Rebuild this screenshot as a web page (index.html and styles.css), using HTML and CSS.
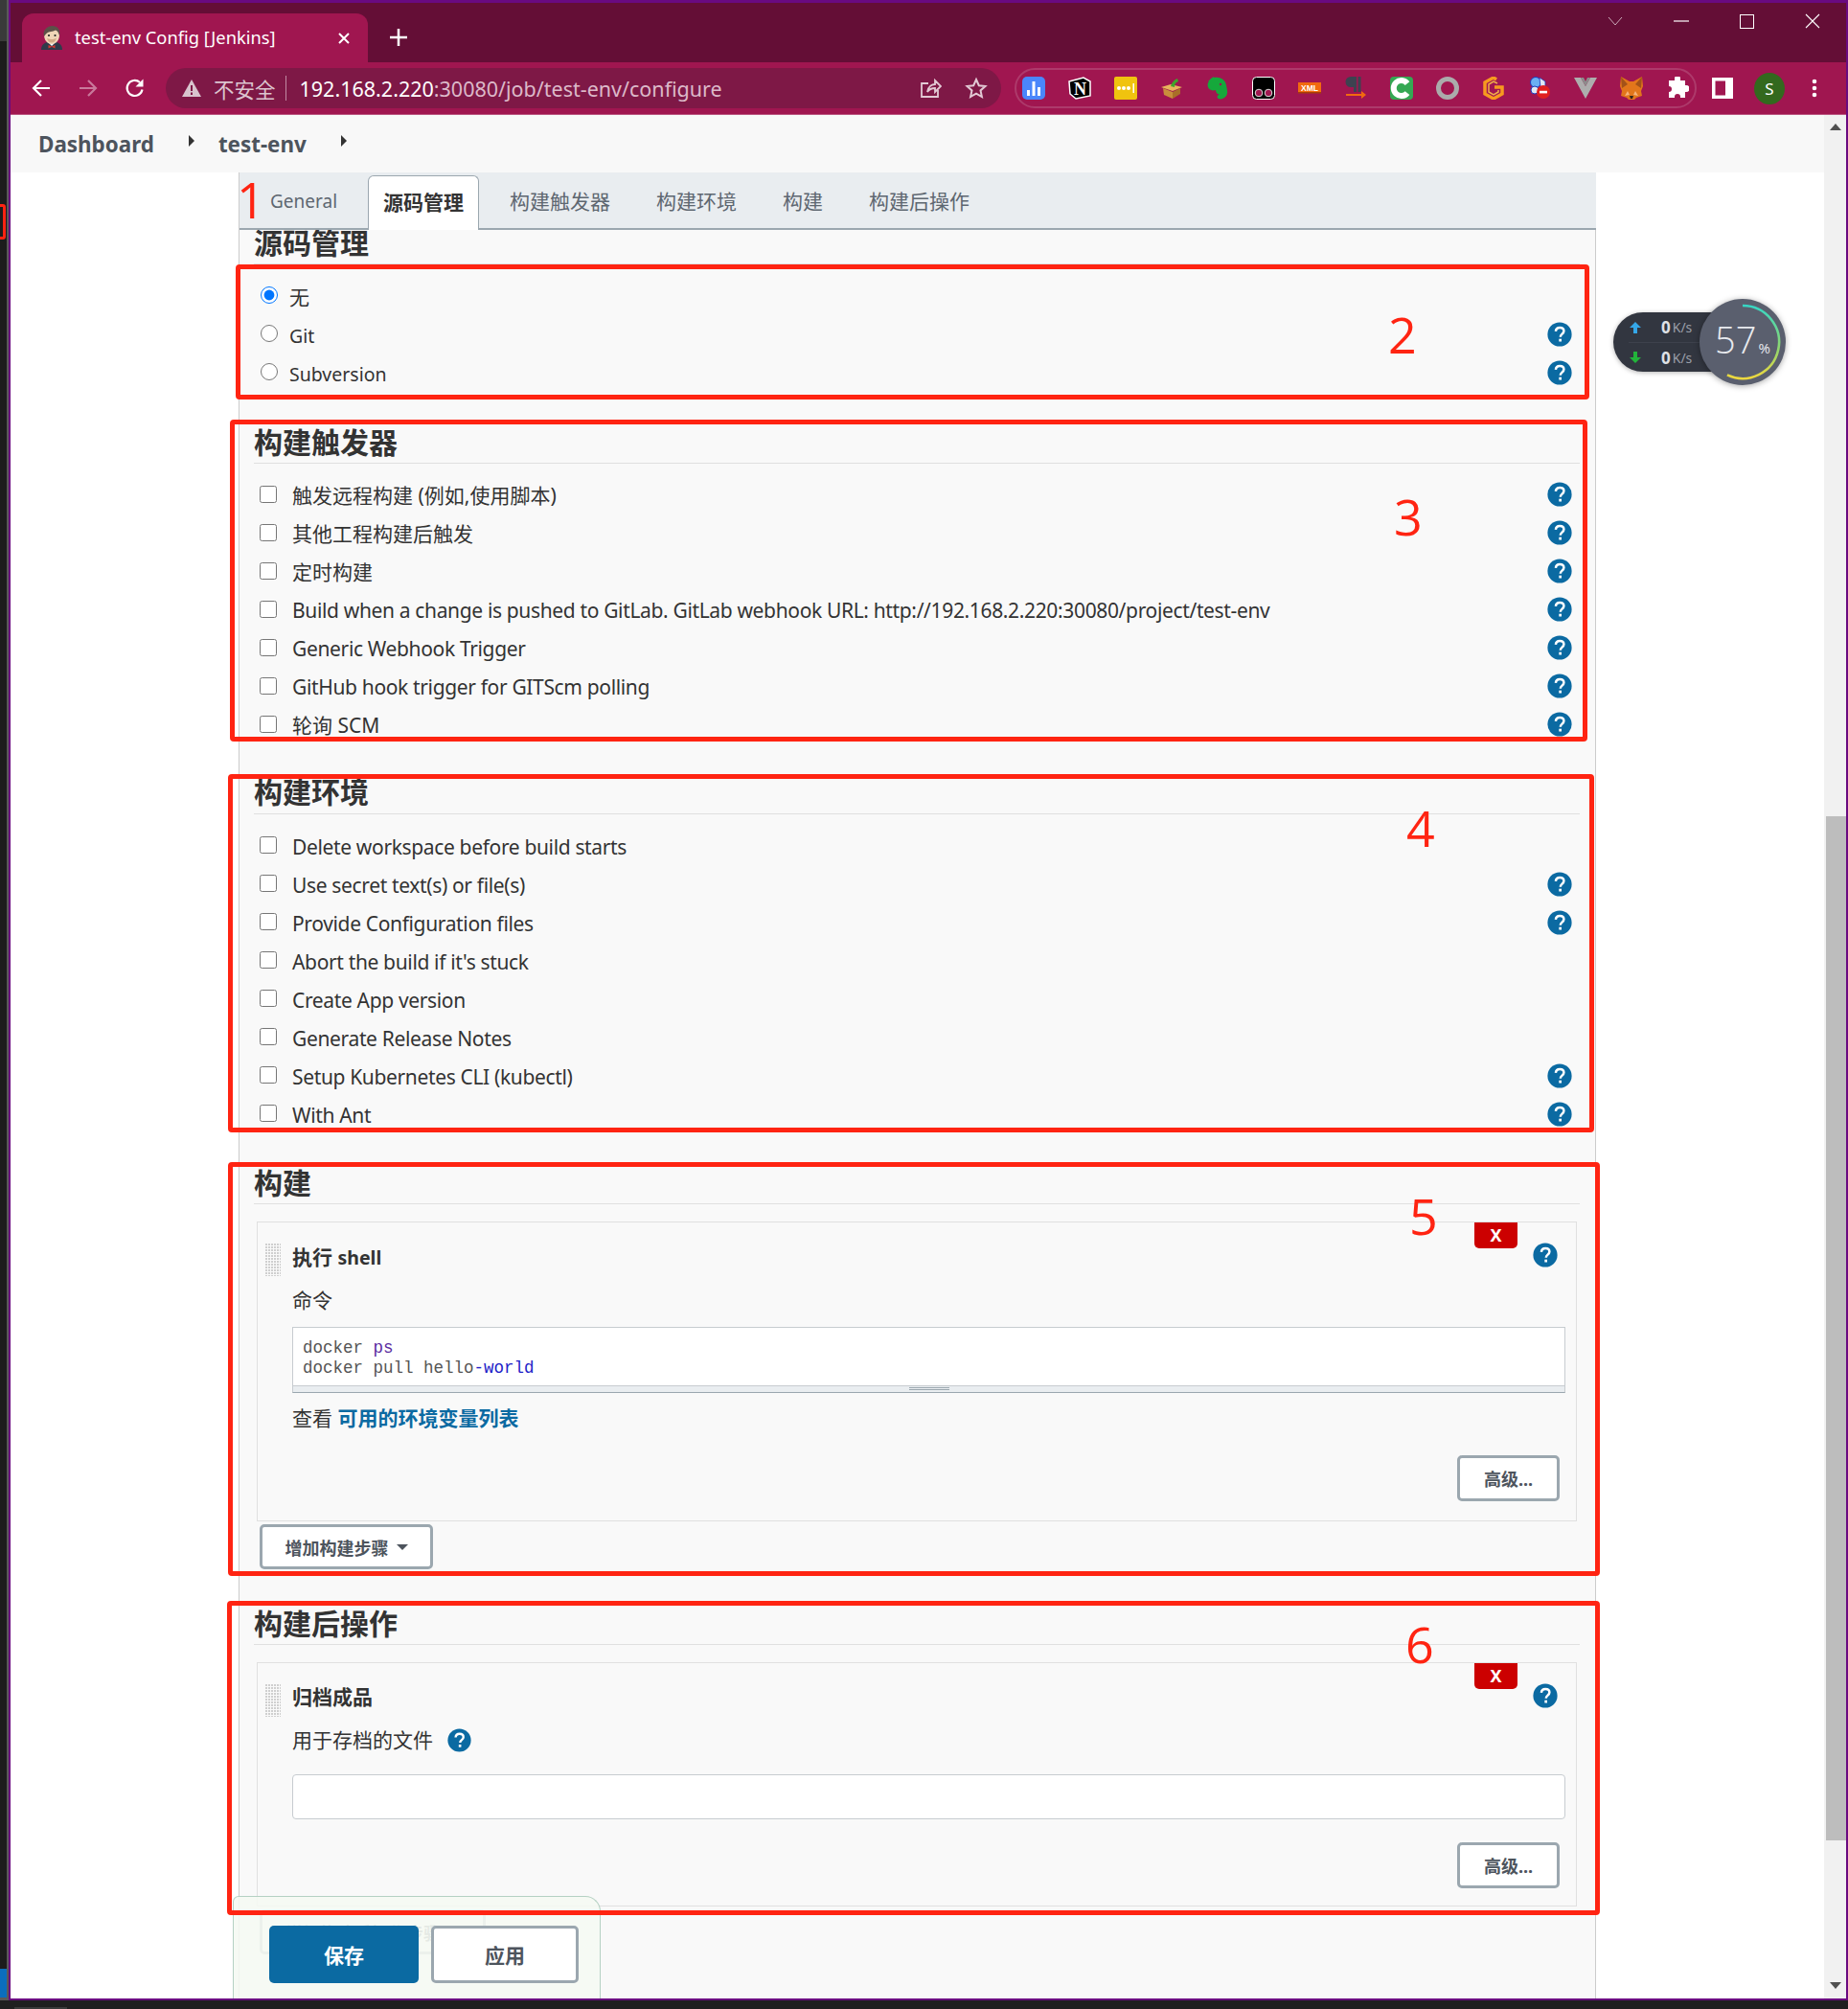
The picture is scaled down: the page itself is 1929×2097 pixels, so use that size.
FILE: index.html
```html
<!DOCTYPE html>
<html lang="zh-CN">
<head>
  <meta charset="UTF-8">
  <meta name="viewport" content="width=device-width, initial-scale=1.0">
  <link rel="stylesheet" href="styles.css">
  <title>test-env Config [Jenkins]</title>
</head>
<body>
  <svg class="defs" width="0" height="0">
    <symbol id="help" viewBox="0 0 26 26">
      <circle cx="13" cy="13" r="12.6" fill="#0b6aa2"/>
      <path d="M8.9 9.9c.2-2.5 2-3.9 4.3-3.9 2.4 0 4.2 1.4 4.2 3.5 0 3.2-3.6 3.1-3.6 6.2" fill="none" stroke="#fff" stroke-width="2.5"/>
      <rect x="12.3" y="17.7" width="2.7" height="2.8" fill="#fff"/>
    </symbol>
  </svg>

  <div class="rail">
    <div class="rail-top"></div>
    <i class="desk-mark"></i>
    <div class="rail-blue"></div>
  </div>

  <div class="window">
    <div class="tabstrip">
      <div class="tab">
        <svg class="favicon" width="24" height="25" viewBox="0 0 24 25">
          <path d="M1 25c0-5 3-7 6-8h10c3 1 6 3 6 8z" fill="#2f3a4a"/>
          <path d="M8 17h8l-4 4z" fill="#fff"/>
          <path d="M8.5 20l3.500 1.500 3.500-1.500v3.500L12 22l-3.500 1.500z" fill="#d33833"/>
          <path d="M4 9.500C4 4 7.500 1 12.500 1S20 4 20 9.500C20 15 16.500 19 12 19s-8-4-8-9.500z" fill="#f0d6b7"/>
          <path d="M4 11C2 4 8 0 12.500 0 18 0 21.500 4 20 10c-1-3-2-5-4-5.500-3 1.500-7 1.500-9 3-1 1-2 2-3 3.500z" fill="#5b5048"/>
          <path d="M7 13c3 1.500 7 1.500 10-.5-1 3.500-2.500 5-5 5s-4-1.500-5-4.500z" fill="#d2ab87"/>
          <circle cx="9" cy="10" r="1.100" fill="#222"/><circle cx="15.500" cy="10" r="1.100" fill="#222"/>
        </svg>
        <span class="tab-title">test-env Config [Jenkins]</span>
        <svg class="tab-close" width="14" height="14" viewBox="0 0 14 14"><path d="M2 2l10 10M12 2L2 12" stroke="#fff" stroke-width="2"/></svg>
      </div>
      <svg class="new-tab" width="20" height="20" viewBox="0 0 20 20"><path d="M10 1v18M1 10h18" stroke="#fff" stroke-width="2.5"/></svg>
      <div class="window-controls">
        <svg width="16" height="10" viewBox="0 0 16 10"><path d="M1 1l7 8 7-8" fill="none" stroke="#c9a9b8" stroke-width="1"/></svg>
        <svg width="16" height="2" viewBox="0 0 16 2"><path d="M0 1h16" stroke="#fff" stroke-width="1.2"/></svg>
        <svg width="15" height="15" viewBox="0 0 15 15"><rect x=".5" y=".5" width="14" height="14" fill="none" stroke="#fff"/></svg>
        <svg width="16" height="16" viewBox="0 0 16 16"><path d="M1 1l14 14M15 1L1 15" stroke="#fff" stroke-width="1.1"/></svg>
      </div>
    </div>

    <div class="toolbar">
      <div class="nav-buttons">
        <svg width="22" height="22" viewBox="0 0 22 22"><path d="M20 11H3M11 3l-8 8 8 8" fill="none" stroke="#fff" stroke-width="2.2"/></svg>
        <svg width="22" height="22" viewBox="0 0 22 22"><path d="M2 11h17M11 3l8 8-8 8" fill="none" stroke="#c9799b" stroke-width="2.2"/></svg>
        <svg width="22" height="22" viewBox="0 0 22 22"><path d="M18.5 12.5A8 8 0 1 1 16 5" fill="none" stroke="#fff" stroke-width="2.2"/><path d="M19.5 1.500v8h-8z" fill="#fff"/></svg>
      </div>
      <div class="address">
        <svg class="warn" width="20" height="18" viewBox="0 0 20 18"><path d="M10 0l10 18H0z" fill="#d8c3cd"/><path d="M9 6h2v6H9zM9 13.5h2V16H9z" fill="#7e1846"/></svg>
        <span class="not-secure">不安全</span>
        <span class="address-sep"></span>
        <span class="url"><b>192.168.2.220</b>:30080/job/test-env/configure</span>
        <svg class="share" width="24" height="24" viewBox="0 0 24 24"><path d="M20 14v7H3V7h7M9 16c1-6 5-8 8-8V4l6 6-6 6v-4c-3 0-6 1-8 4z" fill="none" stroke="#e2c9d4" stroke-width="1.8"/></svg>
        <svg class="star" width="24" height="24" viewBox="0 0 24 24"><path d="M12 3l2.8 6.2 6.700.7-5 4.500 1.400 6.600L12 17.600 6.100 21l1.400-6.600-5-4.500 6.700-.7z" fill="none" stroke="#e2c9d4" stroke-width="2"/></svg>
      </div>
      <div class="extensions">
        <svg width="24" height="24" viewBox="0 0 24 24"><rect width="24" height="24" rx="5" fill="#4a86fb"/><path d="M5 14h3v6H5zM10.5 5h3v15h-3zM16 11h3v9h-3z" fill="#fff"/></svg>
        <svg width="24" height="24" viewBox="0 0 24 24"><path d="M1 5l15-4 7 4v15l-15 3-6-5z" fill="#000" stroke="#fff" stroke-width="1.5"/><text x="12.5" y="19" class="ext-n">N</text></svg>
        <svg width="24" height="24" viewBox="0 0 24 24"><rect width="24" height="24" rx="2" fill="#f0c30f"/><circle cx="5" cy="12" r="2" fill="#fff"/><circle cx="10" cy="12" r="2" fill="#fff"/><circle cx="15" cy="12" r="2" fill="#fff"/><rect x="19.5" y="7" width="1.500" height="10" fill="#fff"/></svg>
        <svg width="24" height="24" viewBox="0 0 24 24"><path d="M1 11l10-3 12 3-10 4z" fill="#e8b45c"/><path d="M3 12l10 4v7l-9-4z" fill="#c98e3c"/><path d="M13 16l8-4v6l-8 5z" fill="#a96f28"/><path d="M11 10c1-4 4-7 7-8l1 3c-3 1-4 3-4 6z" fill="#3fa52b"/></svg>
        <svg width="24" height="24" viewBox="0 0 24 24"><path d="M5 2l3-2v5H2zM8 1c5-1 12 1 13 8 1 5 2 8 0 11-2 3-6 4-8 3-2-1-2-4 1-4-3-1-4-3-4-5-3 1-7 0-8-3-1-3 0-5 1-6h5z" fill="#15a83b"/><circle cx="15" cy="8" r="1.2" fill="#a01650"/></svg>
        <svg width="24" height="24" viewBox="0 0 24 24"><rect x=".5" y=".5" width="23" height="23" rx="4" fill="#000" stroke="#fff"/><circle cx="7" cy="17" r="3.8" fill="#a01650" stroke="#ddd"/><circle cx="17" cy="17" r="3.8" fill="#a01650" stroke="#ddd"/></svg>
        <svg width="24" height="24" viewBox="0 0 24 24"><rect y="6" width="24" height="11" fill="#f26a0f"/><rect y="16" width="24" height="1.5" fill="#a63f06"/><text x="12" y="14.5" class="ext-xml">XML</text></svg>
        <svg width="24" height="24" viewBox="0 0 24 24"><path d="M10 0H7a5.500 5.500 0 0 0 0 11h3zM10 0h3v16h-3zM14.500 0h3v16h-3z" fill="#3d4250"/><path d="M2 19h17" stroke="#f26a0f" stroke-width="2"/><path d="M18 15l5 4-5 4z" fill="#f26a0f"/></svg>
        <svg width="24" height="24" viewBox="0 0 24 24"><rect width="24" height="24" rx="4" fill="#34a853"/><path d="M18 7a8 8 0 1 0 0 10" fill="none" stroke="#fff" stroke-width="6"/></svg>
        <svg width="24" height="24" viewBox="0 0 24 24"><circle cx="12" cy="12" r="9.5" fill="none" stroke="#ababab" stroke-width="5"/></svg>
        <svg width="24" height="24" viewBox="0 0 24 24"><path d="M15 3l-3-2-9 5v12l9 5 9-5v-7h-8" fill="none" stroke="#f79a1f" stroke-width="3.5"/><path d="M16 7l-4-2-5 3v8l5 3 5-3v-2" fill="none" stroke="#f0b04a" stroke-width="1.5"/></svg>
        <svg width="24" height="24" viewBox="0 0 24 24"><circle cx="8" cy="6" r="5.500" fill="#6ab0f3" stroke="#1c39bb"/><path d="M12 1l6 4v6l-5 1z" fill="#dfe8f5" stroke="#1c39bb" stroke-width=".8"/><circle cx="7" cy="14" r="4" fill="#dfe8f5" stroke="#1c39bb"/><circle cx="16" cy="16" r="7" fill="#e02020"/><rect x="12" y="14.8" width="8" height="2.600" fill="#fff"/></svg>
        <svg width="24" height="24" viewBox="0 0 24 24"><path d="M0 1h7l5 9 5-9h7L12 23z" fill="#adadad"/><path d="M7 1h3l2 4 2-4h3l-5 9z" fill="#8c8c8c"/></svg>
        <svg width="24" height="24" viewBox="0 0 24 24"><path d="M1 0l9 5h4l9-5 1 10-2 5 1 5-6 2-2 2h-6l-2-2-6-2 1-5-2-5z" fill="#e2761b"/><path d="M1 0l7 8-6 4zM23 0l-7 8 6 4z" fill="#a35218"/><path d="M8 15l-3 5 5-1zM16 15l3 5-5-1z" fill="#f6b27a"/><path d="M10 20h4l-1 3h-2z" fill="#33261d"/></svg>
        <svg width="24" height="24" viewBox="0 0 24 24"><path d="M9 2a3 3 0 0 1 6 0v2h5v5h1a3.500 3.500 0 0 1 0 7h-1v6h-5v-1a3 3 0 0 0-6 0v1H3v-6a3 3 0 0 0 0-6V4h6z" fill="#fff"/></svg>
      </div>
      <svg class="side-panel" width="22" height="22" viewBox="0 0 22 22"><path d="M0 0h22v22H0zM3.5 3.500v15H14v-15z" fill="#fff" fill-rule="evenodd"/></svg>
      <span class="avatar">S</span>
      <svg class="more" width="6" height="22" viewBox="0 0 6 22"><circle cx="3" cy="4" r="2.3" fill="#fff"/><circle cx="3" cy="11" r="2.3" fill="#fff"/><circle cx="3" cy="18" r="2.3" fill="#fff"/></svg>
    </div>

    <div class="viewport">
      <div class="page">
        <nav class="breadcrumb">
          <a>Dashboard</a><i class="crumb-arrow"></i><a>test-env</a><i class="crumb-arrow"></i>
        </nav>
        <div class="main">
          <div class="panel">
            <div class="tabbar">
              <span class="config-tab general">General</span>
              <span class="config-tab active">源码管理</span>
              <span class="config-tab">构建触发器</span>
              <span class="config-tab">构建环境</span>
              <span class="config-tab">构建</span>
              <span class="config-tab">构建后操作</span>
            </div>

            <section class="section section-scm">
              <h2>源码管理</h2>
              <div class="rows radios">
                <label class="row"><input type="radio" name="scm" checked><span>无</span></label>
                <label class="row"><input type="radio" name="scm"><span class="en">Git</span><svg class="help"><use href="#help"/></svg></label>
                <label class="row"><input type="radio" name="scm"><span class="en">Subversion</span><svg class="help"><use href="#help"/></svg></label>
              </div>
            </section>

            <section class="section section-triggers">
              <h2>构建触发器</h2>
              <div class="rows">
                <label class="row"><input type="checkbox"><span>触发远程构建 (例如,使用脚本)</span><svg class="help"><use href="#help"/></svg></label>
                <label class="row"><input type="checkbox"><span>其他工程构建后触发</span><svg class="help"><use href="#help"/></svg></label>
                <label class="row"><input type="checkbox"><span>定时构建</span><svg class="help"><use href="#help"/></svg></label>
                <label class="row"><input type="checkbox"><span class="en">Build when a change is pushed to GitLab. GitLab webhook URL: http://192.168.2.220:30080/project/test-env</span><svg class="help"><use href="#help"/></svg></label>
                <label class="row"><input type="checkbox"><span class="en">Generic Webhook Trigger</span><svg class="help"><use href="#help"/></svg></label>
                <label class="row"><input type="checkbox"><span class="en">GitHub hook trigger for GITScm polling</span><svg class="help"><use href="#help"/></svg></label>
                <label class="row"><input type="checkbox"><span>轮询 SCM</span><svg class="help"><use href="#help"/></svg></label>
              </div>
            </section>

            <section class="section section-env">
              <h2>构建环境</h2>
              <div class="rows">
                <label class="row"><input type="checkbox"><span class="en">Delete workspace before build starts</span></label>
                <label class="row"><input type="checkbox"><span class="en">Use secret text(s) or file(s)</span><svg class="help"><use href="#help"/></svg></label>
                <label class="row"><input type="checkbox"><span class="en">Provide Configuration files</span><svg class="help"><use href="#help"/></svg></label>
                <label class="row"><input type="checkbox"><span class="en">Abort the build if it's stuck</span></label>
                <label class="row"><input type="checkbox"><span class="en">Create App version</span></label>
                <label class="row"><input type="checkbox"><span class="en">Generate Release Notes</span></label>
                <label class="row"><input type="checkbox"><span class="en">Setup Kubernetes CLI (kubectl)</span><svg class="help"><use href="#help"/></svg></label>
                <label class="row"><input type="checkbox"><span class="en">With Ant</span><svg class="help"><use href="#help"/></svg></label>
              </div>
            </section>

            <section class="section">
              <h2>构建</h2>
              <div class="card">
                <div class="card-head">
                  <span class="handle"></span>
                  <b class="card-title">执行 <span class="title-en">shell</span></b>
                  <span class="remove">X</span>
                  <svg class="help"><use href="#help"/></svg>
                </div>
                <div class="card-body">
                  <div class="field-label">命令</div>
                  <div class="code-box">
                    <pre class="code">docker <span class="kw">ps</span>
docker pull hello<span class="op">-world</span></pre>
                    <div class="grip"><i></i></div>
                  </div>
                  <div class="hint">查看 <a>可用的环境变量列表</a></div>
                  <div class="card-actions"><button class="btn">高级...</button></div>
                </div>
              </div>
              <button class="btn btn-add">增加构建步骤<i class="caret"></i></button>
            </section>

            <section class="section section-post">
              <h2>构建后操作</h2>
              <div class="card card-post">
                <div class="card-head">
                  <span class="handle"></span>
                  <b class="card-title">归档成品</b>
                  <span class="remove">X</span>
                  <svg class="help"><use href="#help"/></svg>
                </div>
                <div class="card-body">
                  <div class="field-label">用于存档的文件 <svg class="help help-inline"><use href="#help"/></svg></div>
                  <input class="text-input" type="text">
                  <div class="card-actions"><button class="btn">高级...</button></div>
                </div>
              </div>
              <button class="btn btn-add btn-add-post">增加构建后操作步骤<i class="caret"></i></button>
            </section>

            <div class="bottom-bar">
              <button class="btn-save">保存</button>
              <button class="btn btn-apply">应用</button>
            </div>
          </div>
        </div>
      </div>
      <div class="scrollbar">
        <i class="scroll-up"></i>
        <div class="scroll-track"><div class="scroll-thumb"></div></div>
        <i class="scroll-down"></i>
      </div>
    </div>
  </div>

  <!-- hand drawn notes on top of the screenshot -->
  <div class="note-box note-box-2"></div>
  <div class="note-box note-box-3"></div>
  <div class="note-box note-box-4"></div>
  <div class="note-box note-box-5"></div>
  <div class="note-box note-box-6"></div>
  <span class="note-num note-num-1">1</span>
  <span class="note-num note-num-2">2</span>
  <span class="note-num note-num-3">3</span>
  <span class="note-num note-num-4">4</span>
  <span class="note-num note-num-5">5</span>
  <span class="note-num note-num-6">6</span>
  <i class="desk-pill"></i>

  <div class="speed">
    <div class="speed-pill">
      <div class="speed-line"><svg width="14" height="14" viewBox="0 0 14 14"><path d="M7 1l6 6H9v6H5V7H1z" fill="#35a7e8"/></svg><b>0</b><small>K/s</small></div>
      <div class="speed-line"><svg width="14" height="14" viewBox="0 0 14 14"><path d="M7 13l6-6H9V1H5v6H1z" fill="#22b33a"/></svg><b>0</b><small>K/s</small></div>
    </div>
    <div class="speed-dial">
      <svg width="90" height="90" viewBox="0 0 90 90">
        <defs><linearGradient id="ring" gradientUnits="userSpaceOnUse" x1="0" y1="6" x2="0" y2="82"><stop offset="0" stop-color="#35d6c6"/><stop offset=".6" stop-color="#8fd66f"/><stop offset="1" stop-color="#ecd83f"/></linearGradient></defs>
        <path d="M45 7A38 38 0 1 1 28.9 79.4" fill="none" stroke="url(#ring)" stroke-width="2.6"/>
      </svg>
      <span class="dial-value">57<small>%</small></span>
    </div>
  </div>
</body>
</html>
```

FILE: styles.css
```css
* {
  box-sizing: border-box;
}
html, body {
  margin: 0;
  height: 2097px;
  overflow: hidden;
}
body {
  background: #1f1f1f;
  font-family: "Noto Sans", "Noto Sans CJK SC", sans-serif;
  font-size: 21px;
  color: #333;
  display: flex;
  align-items: flex-start;
  position: relative;
}
.defs {
  position: absolute;
}

/* what shows of the desktop behind the browser */
.rail {
  width: 9px;
  height: 2088px;
  flex: none;
  background: #1c1c1c;
  border-right: 2px solid #5a5a5a;
  border-bottom: 3px solid #5a5a5a;
  display: flex;
  flex-direction: column;
  justify-content: space-between;
  position: relative;
}
.rail-top {
  height: 43px;
  background: #3a3a3a;
}
.rail-blue {
  height: 30px;
  background: #0a6ebd;
}
.desk-mark {
  position: absolute;
  left: -4px;
  top: 213px;
  width: 10px;
  height: 37px;
  border: 3px solid #ff2412;
  border-radius: 3px;
}
.desk-pill {
  position: absolute;
  left: 15px;
  top: 2095px;
  width: 55px;
  height: 2px;
  background: #3a3a3a;
}

.window {
  width: 1920px;
  height: 2088px;
  flex: none;
  border: 2px solid #6a0a80;
  border-top-width: 3px;
  display: flex;
  flex-direction: column;
  background: #fff;
}

/* browser chrome */
.tabstrip {
  height: 62px;
  background: #640e36;
  display: flex;
  align-items: flex-end;
  flex: none;
  position: relative;
}
.tab {
  width: 361px;
  height: 51px;
  margin-left: 12px;
  background: #a01650;
  border-radius: 12px 12px 0 0;
  display: flex;
  align-items: center;
  padding: 0 18px 0 19px;
  color: #fff;
}
.favicon {
  flex: none;
  margin-right: 12px;
}
.tab-title {
  flex: 1;
  font-size: 18.3px;
  margin-top: -2px;
  white-space: nowrap;
}
.new-tab {
  margin: 0 0 16px 22px;
}
.window-controls {
  position: absolute;
  top: 11px;
  right: 27px;
  display: flex;
  align-items: center;
  gap: 53px;
}
.toolbar {
  height: 55px;
  background: #a01650;
  border-bottom: 1px solid #b9537e;
  display: flex;
  align-items: center;
  flex: none;
}
.nav-buttons {
  display: flex;
  gap: 27px;
  margin-left: 21px;
  width: 141px;
}
.address {
  width: 872px;
  height: 42px;
  background: #7e1846;
  border-radius: 21px;
  display: flex;
  align-items: center;
  padding-left: 17px;
}
.warn {
  flex: none;
}
.not-secure {
  margin-left: 13px;
  color: #dcc4cf;
  font-size: 21.5px;
}
.address-sep {
  width: 1px;
  height: 26px;
  background: #c08aa3;
  margin: 0 14px 0 10px;
}
.url {
  flex: 1;
  font-size: 21.5px;
  color: #dcb9c9;
  white-space: nowrap;
}
.url b {
  color: #fff;
  font-weight: 400;
}
.share {
  margin-right: 24px;
}
.star {
  margin-right: 14px;
}
.extensions {
  width: 712px;
  height: 42px;
  margin-left: 14px;
  border: 2px solid #ad3a6b;
  border-radius: 21px;
  display: flex;
  align-items: center;
  gap: 24px;
  padding-left: 6px;
}
.extensions svg {
  flex: none;
}
.ext-n {
  font-family: "Liberation Serif", serif;
  font-weight: 700;
  font-size: 18px;
  fill: #fff;
  text-anchor: middle;
}
.ext-xml {
  font-family: "Liberation Sans", sans-serif;
  font-weight: 700;
  font-size: 8.5px;
  fill: #fff;
  text-anchor: middle;
}
.side-panel {
  margin-left: 16px;
}
.avatar {
  width: 32px;
  height: 33px;
  margin-left: 22px;
  border-radius: 50%;
  background: #33691e;
  color: #fff;
  font-size: 17px;
  display: flex;
  align-items: center;
  justify-content: center;
}
.more {
  margin-left: 28px;
}

/* page */
.viewport {
  flex: 1;
  display: flex;
  min-height: 0;
}
.page {
  flex: 1;
  min-width: 0;
  display: flex;
  flex-direction: column;
}
.breadcrumb {
  height: 60px;
  flex: none;
  background: #f8f8f8;
  display: flex;
  align-items: center;
  padding-left: 29px;
  color: #4d545d;
  font-weight: 700;
  font-size: 22.4px;
}
.crumb-arrow {
  width: 0;
  height: 0;
  margin: -6px 25px 0 36px;
  border-left: 6px solid #333;
  border-top: 6px solid transparent;
  border-bottom: 6px solid transparent;
}
.main {
  flex: 1;
  padding-left: 238px;
  min-height: 0;
}
.panel {
  width: 1417px;
  height: 100%;
  background: #f9f9f9;
  border-left: 1px solid #ccc;
  border-right: 1px solid #ccc;
  position: relative;
}
.tabbar {
  height: 60px;
  background: #e9edf0;
  border-bottom: 2px solid #9ba7af;
  display: flex;
  align-items: flex-end;
  gap: 16px;
  padding-left: 16px;
  position: relative;
  z-index: 1;
  margin: 0 -1px 0 0;
}
.config-tab {
  height: 57px;
  margin-bottom: -2px;
  padding: 0 16px;
  line-height: 54px;
  color: #5e6770;
  white-space: nowrap;
}
.config-tab.general {
  font-size: 19px;
}
.config-tab.active {
  background: #fff;
  color: #333;
  font-weight: 700;
  border: 1px solid #9ba7af;
  border-bottom: 0;
  border-radius: 6px 6px 0 0;
  padding: 0 15px;
}
.section {
  margin: 33px 16px 0 15px;
}
.section-scm {
  margin-top: -4px;
}
.section-triggers {
  margin-top: 36px;
}
.section-env {
  margin-top: 33px;
}
.section-env + .section {
  margin-top: 34px;
}
.section-post {
  margin-top: 39px;
}
.section h2 {
  margin: 0;
  height: 40px;
  font-size: 30px;
  line-height: 36px;
  font-weight: 700;
  color: #333;
  border-bottom: 1px solid #e0e0e0;
  white-space: nowrap;
}
.rows {
  margin-top: 12px;
}
.section-env h2 {
  height: 41px;
}
.section-env .rows {
  margin-top: 13px;
}
.section-env .row input {
  margin-top: -2px;
}
.row {
  height: 40px;
  display: flex;
  align-items: center;
}
.row input {
  width: 18px;
  height: 18px;
  margin: 0 16px 0 6px;
  flex: none;
}
.radios .row input {
  margin: 0 12px 0 7px;
}
.radios .row span {
  margin-top: 2px;
}
.row span {
  flex: 1;
  white-space: nowrap;
}
.row .en {
  margin-top: 2px;
  letter-spacing: -.35px;
}
.radios .row .en {
  margin-top: 4px;
  font-size: 19.5px;
  letter-spacing: 0;
}
.help {
  width: 26px;
  height: 26px;
  flex: none;
}
.row .help {
  margin-right: 8px;
}
.radios .help {
  margin-top: 2px;
}

/* build step cards */
.card {
  margin-top: 18px;
  margin-left: 3px;
  margin-right: 3px;
  border: 1px solid #e0e0e0;
  padding-bottom: 20px;
}
.card-post {
  padding-bottom: 18px;
}
.card-head {
  height: 60px;
  display: flex;
  align-items: flex-start;
}
.handle {
  width: 17px;
  height: 35px;
  margin: 21px 12px 0 7px;
  background-image: linear-gradient(#f9f9f9 1px, transparent 1px), linear-gradient(90deg, #f9f9f9 1px, transparent 1px);
  background-size: 3px 3px;
  background-color: #cfcfcf;
  flex: none;
}
.card-title {
  flex: 1;
  line-height: 30px;
  margin-top: 21px;
  font-weight: 700;
}
.card-post .card-title {
  margin-top: 20px;
}
.title-en {
  font-size: 19.5px;
}
.remove {
  width: 45px;
  height: 27px;
  background: #c00;
  color: #fff;
  border-radius: 0 0 5px 5px;
  text-align: center;
  font-weight: 700;
  font-size: 18px;
  line-height: 27px;
  flex: none;
}
.card-head .help {
  margin: 21px 19px 0 16px;
}
.card-body {
  padding: 0 11px 0 36px;
}
.field-label {
  height: 30px;
  line-height: 30px;
  margin-top: 6px;
  display: flex;
  align-items: center;
  gap: 15px;
}
.card-post .field-label {
  margin-top: 5px;
}
.help-inline {
  width: 25px;
  height: 25px;
}
.code-box {
  margin-top: 13px;
  height: 69px;
  border: 1px solid #c7ccd0;
  border-bottom-color: #9ba7af;
  background: #fff;
  display: flex;
  flex-direction: column;
}
.code {
  flex: 1;
  margin: 0;
  padding: 11px 10px 0;
  font-family: "Liberation Mono", monospace;
  font-size: 17.5px;
  line-height: 20.5px;
  color: #555;
}
.kw {
  color: #5a2ca0;
}
.op {
  color: #2222c8;
}
.grip {
  height: 7px;
  background: #e9edf0;
  border-top: 1px solid #c7ccd0;
  display: flex;
  justify-content: center;
}
.grip i {
  width: 42px;
  height: 3px;
  margin-top: 1px;
  border-top: 1px solid #9ba7af;
  border-bottom: 1px solid #9ba7af;
}
.hint {
  margin-top: 11px;
  line-height: 30px;
}
.hint a {
  color: #0b6aa2;
  font-weight: 700;
}
.card-actions {
  display: flex;
  justify-content: flex-end;
  padding-right: 6px;
  margin-top: 24px;
}
.btn {
  height: 48px;
  width: 107px;
  padding: 0;
  background: #fff;
  border: 3px solid #9ba7af;
  border-radius: 5px;
  font-family: inherit;
  font-size: 18px;
  font-weight: 700;
  color: #4d545d;
}
.btn-add {
  display: flex;
  align-items: center;
  justify-content: center;
  width: 181px;
  height: 47px;
  margin: 3px 0 0 6px;
}
.btn-add-post {
  width: 236px;
}
.caret {
  width: 0;
  height: 0;
  margin-left: 8px;
  border-top: 6px solid #4d545d;
  border-left: 6px solid transparent;
  border-right: 6px solid transparent;
}
.text-input {
  display: block;
  width: 100%;
  height: 47px;
  margin-top: 21px;
  background: #fff;
  border: 1px solid #c7ccd0;
  border-radius: 4px;
}
.bottom-bar {
  position: absolute;
  left: -7px;
  bottom: 0;
  width: 384px;
  height: 107px;
  background: rgba(245, 249, 243, .9);
  border: 1px solid #b5d1c3;
  border-bottom: 0;
  border-radius: 6px 16px 0 0;
  display: flex;
  gap: 13px;
  padding: 30px 0 0 37px;
  z-index: 2;
}
.btn-save {
  width: 156px;
  height: 60px;
  background: #0b6aa2;
  color: #fff;
  border: 0;
  border-radius: 5px;
  font-family: inherit;
  font-size: 21px;
  font-weight: 700;
}
.btn-apply {
  width: 154px;
  height: 60px;
  font-size: 21px;
}

/* scrollbar */
.scrollbar {
  width: 23px;
  flex: none;
  background: #f1f1f1;
  display: flex;
  flex-direction: column;
  align-items: center;
}
.scroll-up, .scroll-down {
  width: 0;
  height: 0;
  border-left: 6px solid transparent;
  border-right: 6px solid transparent;
}
.scroll-up {
  margin-top: 9px;
  border-bottom: 7px solid #505050;
}
.scroll-down {
  margin-bottom: 10px;
  border-top: 7px solid #505050;
}
.scroll-track {
  flex: 1;
  width: 100%;
  padding-top: 716px;
  padding-bottom: 148px;
}
.scroll-thumb {
  height: 100%;
  margin-left: 2px;
  background: #bdbdbd;
}

/* red notes */
.note-box {
  position: absolute;
  border: 5px solid #ff2412;
  border-radius: 4px;
  z-index: 5;
}
.note-box-2 { left: 246px; top: 276px; width: 1413px; height: 141px; }
.note-box-3 { left: 240px; top: 438px; width: 1417px; height: 336px; }
.note-box-4 { left: 238px; top: 808px; width: 1426px; height: 374px; }
.note-box-5 { left: 238px; top: 1213px; width: 1432px; height: 432px; }
.note-box-6 { left: 237px; top: 1671px; width: 1433px; height: 328px; }
.note-num {
  position: absolute;
  z-index: 6;
  color: #ff2412;
  font-family: "Open Sans", sans-serif;
  font-weight: 400;
  font-size: 52px;
  line-height: 52px;
}
.note-num-1 { left: 247px; top: 182px; }
.note-num-2 { left: 1449px; top: 323px; }
.note-num-3 { left: 1455px; top: 513px; }
.note-num-4 { left: 1468px; top: 838px; }
.note-num-5 { left: 1471px; top: 1243px; }
.note-num-6 { left: 1467px; top: 1690px; }

/* network speed widget */
.speed {
  position: absolute;
  left: 1684px;
  top: 312px;
  width: 180px;
  height: 90px;
  z-index: 4;
}
.speed-pill {
  position: absolute;
  left: 0;
  top: 14px;
  width: 150px;
  height: 62px;
  background: #323640;
  border-radius: 31px;
  box-shadow: 0 1px 5px rgba(0, 0, 0, .3);
  padding-left: 16px;
}
.speed-line {
  height: 31px;
  display: flex;
  align-items: center;
  color: #dfe1e6;
}
.speed-line svg {
  margin-right: 20px;
}
.speed-line + .speed-line {
  border-top: 1px solid #3d414c;
}
.speed-line b {
  font-size: 17px;
  font-weight: 700;
}
.speed-line small {
  margin-left: 2px;
  font-size: 14px;
  color: #9a9ea8;
}
.speed-dial {
  position: absolute;
  right: 0;
  top: 0;
  width: 90px;
  height: 90px;
  background: #5a5f6e;
  border-radius: 50%;
  box-shadow: 0 1px 6px rgba(0, 0, 0, .35);
  display: flex;
  align-items: center;
  justify-content: center;
}
.speed-dial svg {
  position: absolute;
  left: 0;
  top: 0;
}
.dial-value {
  margin-top: -6px;
  color: #e8eaee;
  font-family: "Open Sans", sans-serif;
  font-size: 38px;
  font-weight: 300;
}
.dial-value small {
  font-size: 15px;
  font-weight: 400;
  margin-left: 2px;
}
```
